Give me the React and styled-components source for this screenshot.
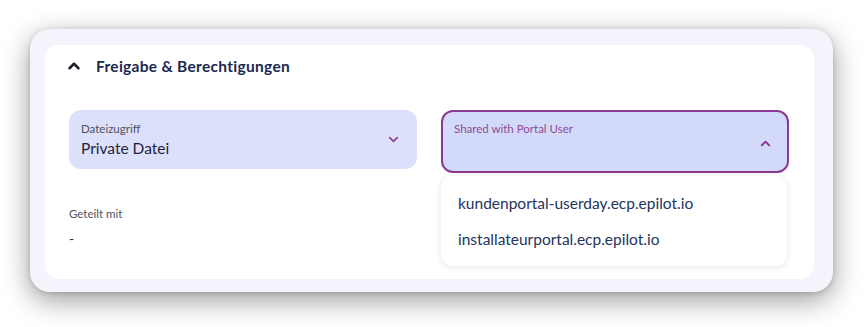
import { createGlobalStyle, styled } from 'styled-components';

const GlobalStyle = createGlobalStyle`
  html, body {
    margin: 0;
    background: #ffffff;
  }
  body {
    font-family: 'Lato', 'Inter', 'Noto Sans', sans-serif;
    -webkit-font-smoothing: antialiased;
  }
`;

function Chevron({ up, color, size = 14, stroke = 2 }) {
  return (
    <svg width={size} height={size} viewBox="0 0 24 24" fill="none">
      <path
        d={up ? 'M6 15l6-6 6 6' : 'M6 9l6 6 6-6'}
        stroke={color}
        strokeWidth={stroke * 1.5}
        strokeLinecap="round"
        strokeLinejoin="round"
      />
    </svg>
  );
}

const domains = ['kundenportal-userday.ecp.epilot.io', 'installateurportal.ecp.epilot.io'];

function App() {
  return (
    <>
      <GlobalStyle />
      <St.Page>
        <St.Frame>
          <St.Panel>
            <St.Header>
              <Chevron up color="#1d1d2b" size={18} stroke={2.2} />
              <h3>Freigabe &amp; Berechtigungen</h3>
            </St.Header>

            <St.Fields>
              <St.Select>
                <St.SelectText>
                  <St.Label>Dateizugriff</St.Label>
                  <St.Value>Private Datei</St.Value>
                </St.SelectText>
                <Chevron color="#93479a" size={15} />
              </St.Select>

              <St.MultiWrapper>
                <St.Select $open>
                  <St.SelectText>
                    <St.Label $accent>Shared with Portal User</St.Label>
                  </St.SelectText>
                  <Chevron up color="#83368a" size={15} />
                </St.Select>
                <St.Menu>
                  {domains.map((d) => (
                    <St.MenuItem key={d}>{d}</St.MenuItem>
                  ))}
                </St.Menu>
              </St.MultiWrapper>
            </St.Fields>

            <St.Shared>
              <St.Label>Geteilt mit</St.Label>
              <St.Dash>-</St.Dash>
            </St.Shared>
          </St.Panel>
        </St.Frame>
      </St.Page>
    </>
  );
}

export default App;

const St = {
  Page: styled.div`
    width: 868px;
    height: 327px;
    box-sizing: border-box;
    padding: 29px 35px 35px 30px;
    overflow: hidden;
  `,
  Frame: styled.div`
    height: 263px;
    box-sizing: border-box;
    padding: 16px 19px 13px 15px;
    background: #f4f4fd;
    border-radius: 20px;
    box-shadow: 0 8px 28px rgba(0, 0, 0, 0.4), 0 1px 5px rgba(0, 0, 0, 0.15);
  `,
  Panel: styled.div`
    height: 100%;
    background: #ffffff;
    border-radius: 14px;
    box-sizing: border-box;
    padding: 0 25px 0 24px;
  `,
  Header: styled.div`
    display: flex;
    align-items: center;
    gap: 13px;
    height: 42px;
    margin-left: -4px;

    h3 {
      margin: 0;
      font-size: 15.5px;
      font-weight: 700;
      color: #1b2950;
      letter-spacing: 0.3px;
    }
  `,
  Fields: styled.div`
    display: grid;
    grid-template-columns: 1fr 1fr;
    gap: 24px;
    margin-top: 23px;
    align-items: start;
  `,
  MultiWrapper: styled.div`
    position: relative;
  `,
  Select: styled.div`
    display: flex;
    justify-content: space-between;
    box-sizing: border-box;
    height: ${(p) => (p.$open ? '63px' : '59px')};
    padding: ${(p) => (p.$open ? '10px 14px 0 11px' : '0 16px 0 12px')};
    border-radius: 12px;
    background: ${(p) => (p.$open ? '#d3d9f9' : '#dde0fb')};
    border: ${(p) => (p.$open ? '2px solid #8a3b91' : 'none')};
    align-items: ${(p) => (p.$open ? 'flex-start' : 'center')};

    svg {
      margin-top: ${(p) => (p.$open ? '14px' : '0')};
    }
  `,
  SelectText: styled.div`
    display: flex;
    flex-direction: column;
    gap: 4px;
  `,
  Label: styled.span`
    font-size: 11.5px;
    color: ${(p) => (p.$accent ? '#8e4a99' : '#4e5260')};
  `,
  Value: styled.span`
    font-size: 15.5px;
    color: #1d2438;
  `,
  Menu: styled.div`
    position: absolute;
    top: 66px;
    left: 0;
    width: 346px;
    box-sizing: border-box;
    padding: 9px 0;
    background: #ffffff;
    border-radius: 12px;
    box-shadow: 0 1px 6px rgba(30, 30, 60, 0.12);
    z-index: 2;
  `,
  MenuItem: styled.div`
    height: 36px;
    display: flex;
    align-items: center;
    padding-left: 17px;
    font-size: 15.5px;
    color: #24345a;
  `,
  Shared: styled.div`
    display: flex;
    flex-direction: column;
    gap: 10px;
    margin-top: 34px;
  `,
  Dash: styled.span`
    font-size: 14px;
    color: #2a2f3d;
  `,
};
